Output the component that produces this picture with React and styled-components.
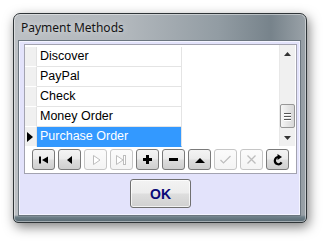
import React from "react";
import styled, { createGlobalStyle } from "styled-components";

const GlobalStyle = createGlobalStyle`
  html, body { margin: 0; padding: 0; background: #ffffff; }
  body { font-family: "Liberation Sans", Arial, sans-serif; }
  * { box-sizing: border-box; }
`;

const Page = styled.div`
  width: 328px;
  height: 245px;
  padding: 13px 0 0 13px;
  overflow: hidden;
`;

const Window = styled.div`
  width: 294px;
  height: 210px;
  display: flex;
  flex-direction: column;
  border: 1px solid #2f3538;
  border-radius: 7px 7px 5px 5px;
  background:
    linear-gradient(to top, #56666f 0px, #6d7f88 5px, transparent 7px),
    linear-gradient(to right, #bcc0c4 0%, #b0b6bb 40%, #929ca3 70%, #77838b 88%, #9aa2a8 100%);
  box-shadow: 2px 4px 12px rgba(0, 0, 0, 0.5), inset 0 0 0 1px rgba(255, 255, 255, 0.45);
`;

const TitleBar = styled.div`
  height: 26px;
  display: flex;
  align-items: center;
  padding: 1px 0 0 7px;
  font-family: "Noto Sans", "Open Sans", sans-serif;
  font-size: 12px;
  color: #141414;
  text-shadow: 0 0 6px rgba(255, 255, 255, 0.7);
`;

const Client = styled.div`
  flex: 1;
  margin: 0 5px 6px 4px;
  border: 1px solid #6b767f;
  background: #e3e3fb;
  box-shadow: inset 0 0 0 1px #f4f4ff;
  display: flex;
  flex-direction: column;
  padding: 3px 3px 0 5px;
`;

const GridPanel = styled.div`
  height: 130px;
  border: 1px solid #a3a3b0;
  background: #ffffff;
  display: flex;
  flex-direction: column;
`;

const GridBody = styled.div`
  height: 102px;
  display: flex;
`;

const RowList = styled.div`
  flex: 1;
  padding-top: 2px;
  display: flex;
  flex-direction: column;
`;

const Row = styled.div`
  display: flex;
  height: 20px;
`;

const Indicator = styled.div`
  width: 12px;
  background: #f0f0f0;
  border-right: 1px solid #e2e2e2;
  border-bottom: 1px solid #ffffff;
  display: flex;
  align-items: center;
  padding-left: 2px;
`;

const Cell = styled.div`
  width: 145px;
  padding: 0 0 0 3px;
  border-right: 1px solid #e4e4e4;
  border-bottom: 1px solid ${(p) => (p.$selected ? "#3399ff" : "#e4e4e4")};
  background: ${(p) => (p.$selected ? "#3399ff" : "#ffffff")};
  color: ${(p) => (p.$selected ? "#ffffff" : "#000000")};
  font-size: 12.5px;
  line-height: 19px;
  white-space: nowrap;
`;

const Pointer = styled.span`
  width: 0;
  height: 0;
  border-top: 5px solid transparent;
  border-bottom: 5px solid transparent;
  border-left: 6px solid #000;
`;

const ScrollBar = styled.div`
  width: 16px;
  margin: 0 1px 1px 0;
  background: #f0f0f0;
  border-left: 1px solid #e8e8e8;
  display: flex;
  flex-direction: column;
  align-items: center;
`;

const ArrowBtn = styled.div`
  height: 17px;
  width: 100%;
  display: flex;
  align-items: center;
  justify-content: center;
`;

const Track = styled.div`
  flex: 1;
  width: 100%;
  display: flex;
  flex-direction: column;
  justify-content: flex-end;
  align-items: center;
`;

const Thumb = styled.div`
  width: 15px;
  height: 24px;
  margin-bottom: 1px;
  border: 1px solid #979797;
  border-radius: 2px;
  background: linear-gradient(to right, #f6f6f6, #e6e6e6 50%, #d8d8d8);
  display: flex;
  flex-direction: column;
  justify-content: center;
  align-items: center;
  gap: 2px;
`;

const Grip = styled.span`
  width: 7px;
  height: 1px;
  background: #555;
  box-shadow: 0 1px 0 #fff;
`;

const NavBar = styled.div`
  flex: 1;
  display: flex;
  align-items: center;
  justify-content: center;
  gap: 3px;
  padding-bottom: 1px;
`;

const NavButton = styled.div`
  width: 23px;
  height: 21px;
  border: 1px solid ${(p) => (p.$disabled ? "#c6c6c6" : "#7a7a7a")};
  border-radius: 3px;
  background: ${(p) =>
    p.$disabled
      ? "linear-gradient(#fbfbfb, #f4f4f4)"
      : "linear-gradient(#f4f4f4 0%, #ebebeb 48%, #dddddd 52%, #cfcfcf 100%)"};
  display: flex;
  align-items: center;
  justify-content: center;
`;

const ButtonRow = styled.div`
  display: flex;
  justify-content: center;
  padding-top: 5px;
`;

const OkButton = styled.div`
  width: 61px;
  height: 29px;
  border: 1px solid #707070;
  border-radius: 3px;
  background: linear-gradient(#f3f3f3 0%, #ececec 48%, #dedede 52%, #d0d0d0 100%);
  box-shadow: inset 0 0 0 1px rgba(255, 255, 255, 0.7);
  display: flex;
  align-items: center;
  justify-content: center;
  font-weight: bold;
  font-size: 14px;
  color: #0a0a78;
`;

const Icon = ({ children, w = 12, h = 10 }) => (
  <svg width={w} height={h} viewBox={`0 0 ${w} ${h}`}>
    {children}
  </svg>
);

const DIS = "#bdbdbd";

const icons = [
  { key: "first", el: (<Icon><rect x="1" y="1.5" width="2" height="7" fill="#000" /><polygon points="10,1.5 4,5 10,8.5" fill="#000" /></Icon>) },
  { key: "prior", el: (<Icon><polygon points="8,1 3,5 8,9" fill="#000" /></Icon>) },
  { key: "next", disabled: true, el: (<Icon><polygon points="3.5,0.5 10,5 3.5,9.5" fill="#fff" stroke={DIS} /></Icon>) },
  { key: "last", disabled: true, el: (<Icon w={13}><polygon points="1.5,0.5 8,5 1.5,9.5" fill="#fff" stroke={DIS} /><rect x="8.5" y="0.5" width="2" height="9" fill="#fff" stroke={DIS} /></Icon>) },
  { key: "insert", el: (<Icon w={11} h={11}><rect x="4" y="1" width="3" height="9" fill="#000" /><rect x="1" y="4" width="9" height="3" fill="#000" /></Icon>) },
  { key: "delete", el: (<Icon w={11} h={11}><rect x="1" y="4" width="9" height="3" fill="#000" /></Icon>) },
  { key: "edit", el: (<Icon w={12} h={8}><polygon points="1,7 6,2 11,7" fill="#000" /></Icon>) },
  { key: "post", disabled: true, el: (<Icon w={13} h={11}><path d="M1.5 6 L4.5 9 L11.5 2" fill="none" stroke={DIS} strokeWidth="1.2" /></Icon>) },
  { key: "cancel", disabled: true, el: (<Icon w={11} h={11}><path d="M1.5 1.5 L9.5 9.5 M9.5 1.5 L1.5 9.5" fill="none" stroke={DIS} strokeWidth="1.3" /></Icon>) },
  { key: "refresh", el: (<Icon w={12} h={12}><path d="M6.5 3 A3.6 3.6 0 1 0 9.6 8.4" fill="none" stroke="#000" strokeWidth="2.2" /><polygon points="5.5,0 10,3 5.5,6" fill="#000" /></Icon>) },
];

const rows = ["Discover", "PayPal", "Check", "Money Order", "Purchase Order"];

export default function App() {
  return (
    <>
      <GlobalStyle />
      <Page>
        <Window>
          <TitleBar>Payment Methods</TitleBar>
          <Client>
            <GridPanel>
              <GridBody>
                <RowList>
                  {rows.map((r, i) => {
                    const sel = i === rows.length - 1;
                    return (
                      <Row key={r}>
                        <Indicator>{sel && <Pointer />}</Indicator>
                        <Cell $selected={sel}>{r}</Cell>
                      </Row>
                    );
                  })}
                </RowList>
                <ScrollBar>
                  <ArrowBtn>
                    <svg width="7" height="4" viewBox="0 0 7 4"><polygon points="0,4 3.5,0 7,4" fill="#333" /></svg>
                  </ArrowBtn>
                  <Track>
                    <Thumb>
                      <Grip />
                      <Grip />
                      <Grip />
                    </Thumb>
                  </Track>
                  <ArrowBtn>
                    <svg width="7" height="4" viewBox="0 0 7 4"><polygon points="0,0 3.5,4 7,0" fill="#333" /></svg>
                  </ArrowBtn>
                </ScrollBar>
              </GridBody>
              <NavBar>
                {icons.map((ic) => (
                  <NavButton key={ic.key} $disabled={ic.disabled}>
                    {ic.el}
                  </NavButton>
                ))}
              </NavBar>
            </GridPanel>
            <ButtonRow>
              <OkButton>OK</OkButton>
            </ButtonRow>
          </Client>
        </Window>
      </Page>
    </>
  );
}
